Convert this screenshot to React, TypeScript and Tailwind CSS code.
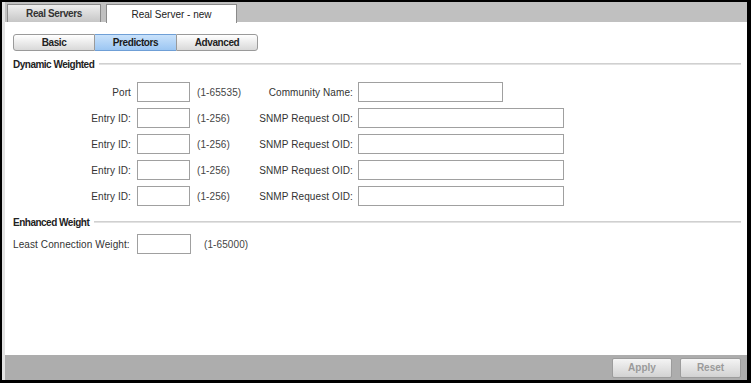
import React from "react";

const font = { fontFamily: '"Liberation Sans", Arial, sans-serif' };

function Input({ w }: { w: string }) {
  return <div className={`${w} h-[20px] border border-[#a0a0a0] bg-white`} />;
}

function Row({ label, hint, label2, w2 }: { label: string; hint: string; label2: string; w2: string }) {
  return (
    <div className="flex items-center h-[20px]">
      <div className="w-[118px] text-right text-[10px] text-[#333] whitespace-nowrap tracking-[0.1px]">{label}</div>
      <div className="ml-[6px]"><Input w="w-[53px]" /></div>
      <div className="ml-[7px] w-[43px] text-[10px] text-[#444] whitespace-nowrap tracking-[0.1px]">{hint}</div>
      <div className="w-[113px] text-right text-[10px] text-[#333] whitespace-nowrap tracking-[0.1px]">{label2}</div>
      <div className="ml-[5px]"><Input w={w2} /></div>
    </div>
  );
}

function Section({ title }: { title: string }) {
  return (
    <div className="flex items-center gap-[5px] h-[14px]">
      <span className="text-[10px] font-bold text-[#222] whitespace-nowrap tracking-[-0.5px]">{title}</span>
      <div className="flex-1 h-[2px] bg-[#e2e2e2] border-t border-[#d0d0d0]" />
    </div>
  );
}

export default function App() {
  return (
    <div className="w-[751px] h-[383px] bg-black pt-[2px] pl-[2px] pr-[4px] pb-[3px]" style={font}>
      <div className="w-full h-full flex flex-col bg-white border-l-[3px] border-[#e2e2e2]">
        {/* header tabs */}
        <div className="h-[20px] bg-[#c0c0c0] flex items-end pl-[2px] gap-[5px]">
          <div className="w-[94px] h-[18px] border border-[#8a8a8a] border-b-0 bg-gradient-to-b from-[#eeeeee] to-[#c6c6c6] flex items-center justify-center text-[10px] font-bold text-[#333] tracking-[-0.4px]">
            Real Servers
          </div>
          <div className="w-[131px] h-[19px] -mb-[1px] border border-[#8a8a8a] border-b-0 bg-white flex items-center justify-center text-[10px] text-[#222]">
            Real Server - new
          </div>
        </div>
        {/* content */}
        <div className="flex-1 flex flex-col pl-[8px] pr-[6px] pt-[12px]">
          <div className="flex h-[17px] w-[245px] text-[10px] font-bold tracking-[-0.4px]">
            <div className="w-[82px] flex items-center justify-center rounded-l-[3px] border border-[#9a9a9a] bg-gradient-to-b from-[#ffffff] to-[#d9d9d9] text-[#222]">Basic</div>
            <div className="w-[81px] flex items-center justify-center border-y border-[#6f9fd6] bg-gradient-to-b from-[#c9e2fb] to-[#9cc6f2] text-[#1a1a1a]">Predictors</div>
            <div className="w-[82px] flex items-center justify-center rounded-r-[3px] border border-[#9a9a9a] bg-gradient-to-b from-[#ffffff] to-[#d9d9d9] text-[#222]">Advanced</div>
          </div>
          <div className="mt-[6px]">
            <Section title="Dynamic Weighted" />
          </div>
          <div className="flex flex-col gap-[6px] mt-[11px]">
            <Row label="Port" hint="(1-65535)" label2="Community Name:" w2="w-[145px]" />
            <Row label="Entry ID:" hint="(1-256)" label2="SNMP Request OID:" w2="w-[206px]" />
            <Row label="Entry ID:" hint="(1-256)" label2="SNMP Request OID:" w2="w-[206px]" />
            <Row label="Entry ID:" hint="(1-256)" label2="SNMP Request OID:" w2="w-[206px]" />
            <Row label="Entry ID:" hint="(1-256)" label2="SNMP Request OID:" w2="w-[206px]" />
          </div>
          <div className="mt-[9px]">
            <Section title="Enhanced Weight" />
          </div>
          <div className="flex items-center h-[20px] mt-[5px]">
            <div className="w-[118px] text-[10px] text-[#333] whitespace-nowrap tracking-[0.1px]">Least Connection Weight:</div>
            <div className="ml-[6px]"><Input w="w-[54px]" /></div>
            <div className="ml-[13px] text-[10px] text-[#444] tracking-[0.1px]">(1-65000)</div>
          </div>
        </div>
        {/* footer */}
        <div className="h-[25px] bg-[#adadad] flex items-center justify-end gap-[8px] pr-[6px]">
          <div className="w-[60px] h-[20px] border border-[#9c9c9c] rounded-[2px] bg-gradient-to-b from-[#f4f4f4] to-[#d2d2d2] flex items-center justify-center text-[10px] font-bold text-[#9a9a9a]">Apply</div>
          <div className="w-[61px] h-[20px] border border-[#9c9c9c] rounded-[2px] bg-gradient-to-b from-[#f4f4f4] to-[#d2d2d2] flex items-center justify-center text-[10px] font-bold text-[#9a9a9a]">Reset</div>
        </div>
      </div>
    </div>
  );
}
